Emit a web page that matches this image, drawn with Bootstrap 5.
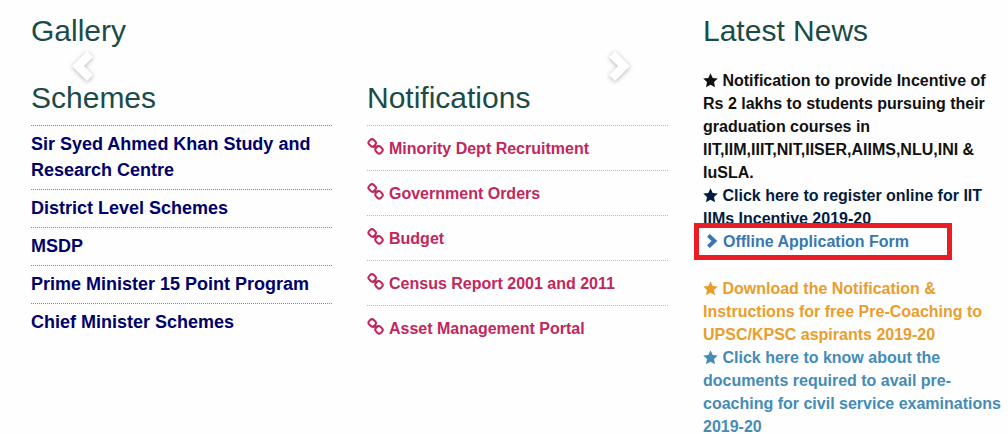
<!DOCTYPE html>
<html lang="en">
<head>
<meta charset="utf-8">
<meta name="viewport" content="width=device-width, initial-scale=1">
<title>Minority Welfare</title>
<link href="https://cdn.jsdelivr.net/npm/bootstrap@5.3.0/dist/css/bootstrap.min.css" rel="stylesheet">
<style>
  body { font-family: "Liberation Sans", Arial, sans-serif; color: #111; background: #fefefe; }
  h2 { font-size: 30px; line-height: 33px; color: #1b4b48; margin: 0; }
  a { text-decoration: none; color: inherit; }
  .panel { padding: 0 4px 0 31px; }
  .page-top { padding-top: 14px; }
  .gallery { height: 30px; margin: 4px 6px 0 36px; }
  .gallery .carousel-control-prev, .gallery .carousel-control-next { opacity: 1; }
  .arrow { width: 30px; height: 38px; overflow: visible; filter: drop-shadow(0 1px 2px rgba(0, 0, 0, .3)); }
  .scheme-list, .notice-list { margin: 11px 0 0; }
  .scheme-list { font-size: 18px; line-height: 26px; color: #00006b; }
  .scheme-list li { border-top: 1px dotted #888; padding: 5px 0 6px; }
  .notice-list { font-size: 16px; line-height: 23px; color: #c2275c; }
  .notice-list li { border-top: 1px dotted #bbb; padding: 11px 0 10px; }
  .news { font-size: 16px; line-height: 23px; margin-top: 22px; }
  .chain { width: 17px; height: 17px; margin-right: 5px; vertical-align: -1px; }
  .star { width: 15px; height: 15px; vertical-align: -2px; }
  .chev { width: 13px; height: 14px; margin: 0 4px 0 3px; vertical-align: -1px; }
  .c-navy { color: #021c40; }
  .c-link { color: #3a77b0; }
  .c-orange { color: #eb9d2b; }
  .c-blue { color: #458bb6; }
  .callout::after { content: ""; position: absolute; inset: -7px 52px -7px -9px; border: 5px solid #ec1c24; pointer-events: none; }
</style>
</head>
<body>
<svg class="d-none" aria-hidden="true">
  <symbol id="star" viewBox="0 0 15 15"><path fill="currentColor" d="M7.5.2 9.7 5l5.1.6-3.8 3.5 1 5.2-4.5-2.6L3 14.3l1-5.2L.2 5.6 5.3 5z"/></symbol>
  <symbol id="chain" viewBox="0 0 17 17"><g fill="none" stroke="currentColor" stroke-width="2"><rect x="1.7" y="1.7" width="7" height="6.4" rx="2.6" transform="rotate(45 5.2 4.9)"/><rect x="8.5" y="8.6" width="7" height="6.4" rx="2.6" transform="rotate(45 12 11.8)"/><path d="M5.4 9.2 8 8.2l1 .8 2.6-1.2M8 7l1.2 3.6"/></g></symbol>
  <symbol id="chev" viewBox="0 0 13 14"><path fill="none" stroke="currentColor" stroke-width="4" d="M2.4 1.4 8.4 7l-6 5.6"/></symbol>
</svg>
<main class="container-fluid px-0 page-top">
  <div class="row g-0">
    <div class="col-8">
      <h2 class="panel">Gallery</h2>
      <div class="carousel gallery" id="gallery">
        <button class="carousel-control-prev" type="button" aria-label="Previous">
          <svg class="arrow" viewBox="0 0 30 38"><path fill="#fff" d="M4 19 19 4l6 6-9 9 9 9-6 6z"/></svg>
        </button>
        <button class="carousel-control-next" type="button" aria-label="Next">
          <svg class="arrow" viewBox="0 0 30 38"><path fill="#fff" d="M26 19 11 4l-6 6 9 9-9 9 6 6z"/></svg>
        </button>
      </div>
      <div class="row g-0">
        <section class="col-6 panel">
          <h2>Schemes</h2>
          <ul class="list-unstyled fw-bold scheme-list">
            <li><a href="#">Sir Syed Ahmed Khan Study and Research Centre</a></li>
            <li><a href="#">District Level Schemes</a></li>
            <li><a href="#">MSDP</a></li>
            <li><a href="#">Prime Minister 15 Point Program</a></li>
            <li><a href="#">Chief Minister Schemes</a></li>
          </ul>
        </section>
        <section class="col-6 panel">
          <h2>Notifications</h2>
          <ul class="list-unstyled fw-bold notice-list">
            <li><a href="#"><svg class="chain"><use href="#chain"/></svg>Minority Dept Recruitment</a></li>
            <li><a href="#"><svg class="chain"><use href="#chain"/></svg>Government Orders</a></li>
            <li><a href="#"><svg class="chain"><use href="#chain"/></svg>Budget</a></li>
            <li><a href="#"><svg class="chain"><use href="#chain"/></svg>Census Report 2001 and 2011</a></li>
            <li><a href="#"><svg class="chain"><use href="#chain"/></svg>Asset Management Portal</a></li>
          </ul>
        </section>
      </div>
    </div>
    <section class="col-4 panel">
      <h2>Latest News</h2>
      <ul class="list-unstyled fw-bold mb-0 news">
        <li><a href="#"><svg class="star"><use href="#star"/></svg> Notification to provide Incentive of Rs 2 lakhs to students pursuing their graduation courses in IIT,IIM,IIIT,NIT,IISER,AIIMS,NLU,INI &amp; IuSLA.</a></li>
        <li class="c-navy"><a href="#"><svg class="star"><use href="#star"/></svg> Click here to register online for IIT IIMs Incentive 2019-20</a></li>
        <li class="c-link position-relative callout mb-4"><a href="#"><svg class="chev"><use href="#chev"/></svg>Offline Application Form</a></li>
        <li class="c-orange"><a href="#"><svg class="star"><use href="#star"/></svg> Download the Notification &amp; Instructions for free Pre-Coaching to UPSC/KPSC aspirants 2019-20</a></li>
        <li class="c-blue"><a href="#"><svg class="star"><use href="#star"/></svg> Click here to know about the documents required to avail pre-coaching for civil service examinations 2019-20</a></li>
      </ul>
    </section>
  </div>
</main>
<script src="https://cdn.jsdelivr.net/npm/bootstrap@5.3.0/dist/js/bootstrap.bundle.min.js"></script>
</body>
</html>
